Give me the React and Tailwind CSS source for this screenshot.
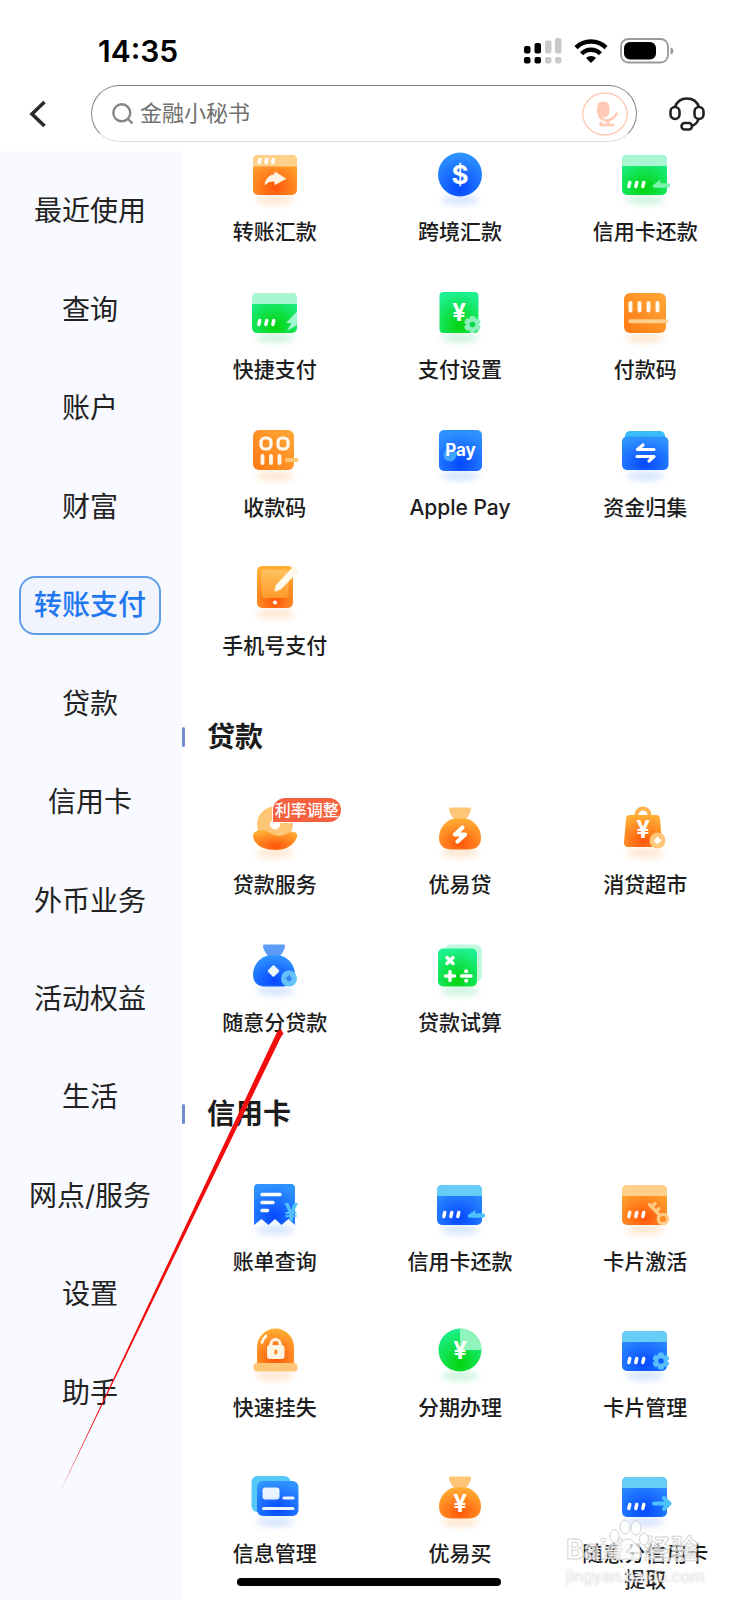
import React from "react";

const SHADES = {
  orange: { from: "#ffad33", to: "#ff560a", light: "#ffd08a", glow: "#ff8a1e" },
  blue: { from: "#2f93ff", to: "#0648ff", light: "#66cdf7", glow: "#3b82f6" },
  green: { from: "#1df08f", to: "#04d40c", light: "#a8f6d2", glow: "#19c96c" },
};

const fillOf = (tone) => `url(#fill-${tone})`;

const Defs = () => (
  <svg className="absolute h-0 w-0" aria-hidden="true">
    <defs>
      {Object.entries(SHADES).map(([tone, s]) => (
        <radialGradient key={tone} id={`fill-${tone}`} cx="0.5" cy="0.82" r="0.8">
          <stop offset="0" stopColor={s.to} />
          <stop offset="1" stopColor={s.from} />
        </radialGradient>
      ))}
      <linearGradient id="fill-amber" x1="1" y1="0" x2="0" y2="1">
        <stop offset="0" stopColor="#ffa837" />
        <stop offset="1" stopColor="#ff7a14" />
      </linearGradient>
      <linearGradient id="fill-pad" x1="0" y1="0" x2="0" y2="1">
        <stop offset="0" stopColor="#ffc25e" />
        <stop offset="1" stopColor="#ff9a2c" />
      </linearGradient>
      <filter id="soft" x="-50%" y="-100%" width="200%" height="300%">
        <feGaussianBlur stdDeviation="3" />
      </filter>
    </defs>
  </svg>
);

const Icon = ({ tone, children }) => (
  <svg viewBox="0 0 60 60" className="h-[60px] w-[60px] overflow-visible" aria-hidden="true">
    <ellipse cx="30" cy="55" rx="19" ry="5" fill={SHADES[tone].glow} opacity="0.2" filter="url(#soft)" />
    {children}
  </svg>
);

const Ticks = () => (
  <path
    d="M13.8 41.5l1-4M20.8 41.5l1-4M27.8 41.5l1-4"
    stroke="#fff"
    strokeWidth="3.4"
    strokeLinecap="round"
  />
);

const Yen = ({ x, y, size = 24, fill = "#fff" }) => (
  <text
    x={x}
    y={y}
    fill={fill}
    fontSize={size}
    fontWeight="700"
    textAnchor="middle"
    fontFamily="Inter, 'Liberation Sans', sans-serif"
  >
    ¥
  </text>
);

const Gear = ({ x, y, fill, hole }) => (
  <g transform={`translate(${x} ${y})`}>
    {[0, 60, 120].map((a) => (
      <rect key={a} x="-3" y="-8.5" width="6" height="17" rx="2" fill={fill} transform={`rotate(${a})`} />
    ))}
    <circle r="6.5" fill={fill} />
    <circle r="2.8" fill={hole} />
  </g>
);

const CardBase = ({ tone }) => (
  <>
    <rect x="7" y="10" width="45" height="40" rx="5" fill={fillOf(tone)} />
    <path d="M7 21v-6a5 5 0 0 1 5-5h35a5 5 0 0 1 5 5v6z" fill={SHADES[tone].light} />
    <Ticks />
  </>
);

const BackArrow = ({ color }) => (
  <path
    d="M38 40.5l7-5v3.2h8a1.8 1.8 0 0 1 0 3.600H39.500a1.500 1.500 0 0 1-1.500-1.800z"
    fill={color}
    stroke={color}
    strokeWidth="0.8"
    strokeLinejoin="round"
  />
);

const MoneyBag = ({ tone, neck }) => (
  <>
    <path
      d="M20.500 9.500h19a1.500 1.500 0 0 1 1.500 1.800c-.4 3.700-2.500 6.700-5 9.700H24c-2.500-3-4.600-6-5-9.700a1.500 1.500 0 0 1 1.500-1.800z"
      fill={neck}
    />
    <path
      d="M24 20.500h12c9 2 15 10.500 15 19 0 8.500-5 12-13 12H22c-8 0-13-3.500-13-12 0-8.500 6-17 15-19z"
      fill={fillOf(tone)}
    />
  </>
);

const ICONS = {
  transfer: (
    <Icon tone="orange">
      <rect x="8" y="10" width="44" height="40" rx="5" fill={fillOf("orange")} />
      <path d="M8 21.500V15a5 5 0 0 1 5-5h34a5 5 0 0 1 5 5v6.500z" fill="#ffd08a" />
      <path d="M14.300 17.500l.7-3M21 17.500l.7-3M27.700 17.500l.7-3" stroke="#fff" strokeWidth="3.4" strokeLinecap="round" />
      <path
        d="M20 39.500c1-6.500 5-9.500 10-9.800V27l10.500 6.700L30 39.500V36c-4-.3-7 .7-10 3.500z"
        fill="#fff4e4"
        stroke="#fff4e4"
        strokeWidth="1"
        strokeLinejoin="round"
      />
    </Icon>
  ),
  dollar: (
    <Icon tone="blue">
      <circle cx="30" cy="29.500" r="22" fill={fillOf("blue")} />
      <text x="30" y="39" fill="#fff" fontSize="26" fontWeight="700" textAnchor="middle" fontFamily="Inter, sans-serif">
        $
      </text>
    </Icon>
  ),
  cardGreen: (
    <Icon tone="green">
      <CardBase tone="green" />
      <BackArrow color="#7df3ae" />
    </Icon>
  ),
  quickPay: (
    <Icon tone="green">
      <CardBase tone="green" />
      <path d="M52 28.500L41 40h5.500L42 48l10-6z" fill="#a2f6cf" />
    </Icon>
  ),
  paySettings: (
    <Icon tone="green">
      <rect x="9.500" y="9" width="39" height="41" rx="4" fill={fillOf("green")} />
      <Yen x="29" y="38" />
      <Gear x={42.5} y={41.5} fill="#8bf0bb" hole="#0cd84c" />
    </Icon>
  ),
  payCode: (
    <Icon tone="orange">
      <rect x="9" y="10" width="42" height="40" rx="6" fill="url(#fill-amber)" />
      <path d="M15.500 20v7.500M24.500 20v7.500M33.500 20v7.500M42.500 20v7.500" stroke="#fff7ec" strokeWidth="4" strokeLinecap="round" />
      <path d="M15.500 38.200H51" stroke="#ffd08a" strokeWidth="4" strokeLinecap="round" />
    </Icon>
  ),
  receiveCode: (
    <Icon tone="orange">
      <rect x="8" y="9" width="41" height="40" rx="6" fill="url(#fill-amber)" />
      <rect x="16" y="17" width="10" height="11" rx="4" fill="none" stroke="#fff7ec" strokeWidth="3.2" />
      <rect x="33" y="17" width="10" height="11" rx="4" fill="none" stroke="#fff7ec" strokeWidth="3.2" />
      <path d="M17.500 35v7M26 35v7M34.500 35v7" stroke="#fff7ec" strokeWidth="3.800" strokeLinecap="round" />
      <path d="M42 39h9.500" stroke="#ffc676" strokeWidth="4" strokeLinecap="round" />
    </Icon>
  ),
  applePay: (
    <Icon tone="blue">
      <rect x="9" y="9" width="43" height="41" rx="5" fill={fillOf("blue")} />
      <circle cx="20" cy="34" r="6.500" fill="#3fa5ff" />
      <text x="30.500" y="35" fill="#fff" fontSize="17" fontWeight="700" textAnchor="middle" fontFamily="Inter, sans-serif">
        Pay
      </text>
    </Icon>
  ),
  pooling: (
    <Icon tone="blue">
      <rect x="10" y="10" width="40" height="20" rx="5" fill="#38bdf8" />
      <rect x="7" y="15.500" width="46.500" height="33.500" rx="5" fill={fillOf("blue")} />
      <path
        d="M39 28.500H22.500l5.500-4.500M22 35.500h17L34 40"
        fill="none"
        stroke="#fff"
        strokeWidth="3.2"
        strokeLinecap="round"
        strokeLinejoin="round"
      />
    </Icon>
  ),
  phonePay: (
    <Icon tone="orange">
      <rect x="12" y="7" width="36" height="42" rx="5" fill={fillOf("orange")} />
      <rect x="16.500" y="10.500" width="27" height="28.500" rx="3" fill="url(#fill-pad)" />
      <circle cx="30" cy="43.500" r="2.100" fill="#fff" />
      <path
        d="M29.500 32.500l1.500-6.500L46.500 9.500a2 2 0 0 1 3 0l2 1.700a2 2 0 0 1 0 3L35.500 30.500z"
        fill="#fffaf0"
        stroke="#ffe3b8"
        strokeWidth="0.6"
      />
    </Icon>
  ),
  loanService: (
    <Icon tone="orange">
      <circle cx="30" cy="26.500" r="11.500" fill="none" stroke="#ffc678" strokeWidth="13" />
      <path
        d="M8 38c0-4.500 5-6.500 11-5.500 6 1 9 5.500 15 5.500 5.500-.3 9-4 14-4 4 0 5 2.500 3.500 6C48.500 47.500 41 52 30.500 52 17 52 8.500 46 8 38z"
        fill={fillOf("orange")}
      />
    </Icon>
  ),
  boltBag: (
    <Icon tone="orange">
      <MoneyBag tone="orange" neck="#ffc678" />
      <path d="M32.500 29.500L25 36.500h10L27.500 43.500" fill="none" stroke="#fff" strokeWidth="4.2" strokeLinecap="round" strokeLinejoin="round" />
    </Icon>
  ),
  market: (
    <Icon tone="orange">
      <path d="M21.500 19v-2a6.500 6.500 0 0 1 13 0v2" fill="none" stroke="#ffb04e" strokeWidth="4" />
      <path
        d="M15 17h26a4 4 0 0 1 4 3.500l2 24a4 4 0 0 1-4 4.500H13a4 4 0 0 1-4-4.500l2-24A4 4 0 0 1 15 17z"
        fill={fillOf("orange")}
      />
      <Yen x="28" y="40" />
      <circle cx="42.500" cy="42.500" r="8" fill="#ffc678" />
      <path d="M42.500 38.500l4 4-4 4-4-4z" fill="#fff" />
    </Icon>
  ),
  coinBag: (
    <Icon tone="blue">
      <g transform="translate(-1 -1)">
        <MoneyBag tone="blue" neck="#5c9cf8" />
      </g>
      <rect x="-4.500" y="-4.500" width="9" height="9" rx="1.500" fill="#eef6ff" transform="translate(28.500 35) rotate(45)" />
      <circle cx="44" cy="42.500" r="8" fill="#66c3fa" />
      <rect x="-2.500" y="-2.500" width="5" height="5" fill="#2f86f4" transform="translate(44 42.500) rotate(45)" />
    </Icon>
  ),
  calculator: (
    <Icon tone="green">
      <rect x="15" y="8.500" width="37" height="37" rx="6" fill="#c2f9dd" />
      <rect x="8" y="12.500" width="39" height="38" rx="5" fill={fillOf("green")} />
      <path
        d="M17 21.500l6 6M23 21.500l-6 6M15.500 40h9M20 35.500v9M31.500 40h9.500"
        stroke="#fff"
        strokeWidth="3.4"
        strokeLinecap="round"
      />
      <circle cx="36.200" cy="35.300" r="2" fill="#fff" />
      <circle cx="36.200" cy="44.700" r="2" fill="#fff" />
    </Icon>
  ),
  bill: (
    <Icon tone="blue">
      <path d="M9 13a4 4 0 0 1 4-4h33a4 4 0 0 1 4 4v37l-6.500-6-7 6-6.500-6-6.500 6-7-6L9 50z" fill={fillOf("blue")} />
      <path d="M17 19.500h18M17 27.500h11M17 35.500h5.500" stroke="#fff" strokeWidth="3.4" strokeLinecap="round" />
      <Yen x="46" y="45.500" fill="#55c0fb" />
    </Icon>
  ),
  cardBlue: (
    <Icon tone="blue">
      <CardBase tone="blue" />
      <BackArrow color="#4cc3fa" />
    </Icon>
  ),
  cardKey: (
    <Icon tone="orange">
      <CardBase tone="orange" />
      <path
        d="M45 40.500L34.500 29.500M36.500 32l3.500-3.500M41 36.500l3-3"
        stroke="#ffcb84"
        strokeWidth="3.4"
        strokeLinecap="round"
      />
      <circle cx="48" cy="44" r="4.700" fill="#ff8a26" stroke="#ffcb84" strokeWidth="3.2" />
    </Icon>
  ),
  lock: (
    <Icon tone="orange">
      <path d="M12 43V26a18.500 18.500 0 0 1 37 0v17z" fill={fillOf("orange")} />
      <rect x="8.500" y="42" width="44" height="8.500" rx="3.500" fill="#ffc678" />
      <path d="M17 21.500c.8-2.800 2-4.800 4-6.500" fill="none" stroke="#fff" strokeWidth="2.6" strokeLinecap="round" />
      <path d="M26 25v-2a4.600 4.600 0 0 1 9.200 0v2" fill="none" stroke="#fff4e4" strokeWidth="3" />
      <rect x="22" y="24" width="17.500" height="14" rx="3" fill="#fff4e4" />
      <rect x="29.300" y="28.500" width="3" height="5" rx="1.500" fill="#ff8a26" />
    </Icon>
  ),
  installment: (
    <Icon tone="green">
      <circle cx="30" cy="29" r="21.500" fill={fillOf("green")} />
      <path d="M30 7.500A21.500 21.500 0 0 1 51.500 29H30z" fill="#8ff5bd" />
      <Yen x="30" y="38" />
    </Icon>
  ),
  cardGear: (
    <Icon tone="blue">
      <CardBase tone="blue" />
      <Gear x={46} y={40} fill="#56bffa" hole="#0f5fff" />
    </Icon>
  ),
  info: (
    <Icon tone="blue">
      <rect x="6.500" y="9" width="39" height="36" rx="6" fill="#55c8f8" />
      <rect x="12" y="14" width="41.500" height="35" rx="6" fill={fillOf("blue")} />
      <rect x="17.500" y="20.500" width="17" height="12" rx="3" fill="#e9f2ff" />
      <path d="M39 31h9M18.500 41.500H48" stroke="#e9f2ff" strokeWidth="3.2" strokeLinecap="round" />
    </Icon>
  ),
  yenBag: (
    <Icon tone="orange">
      <MoneyBag tone="orange" neck="#ffc678" />
      <Yen x="30" y="44.500" />
    </Icon>
  ),
  cardOut: (
    <Icon tone="blue">
      <CardBase tone="blue" />
      <path
        d="M39 36.500h15M49 31l5.500 5.500L49 42"
        fill="none"
        stroke="#4cc3fa"
        strokeWidth="4"
        strokeLinecap="round"
        strokeLinejoin="round"
      />
    </Icon>
  ),
};

const MENU = [
  "最近使用",
  "查询",
  "账户",
  "财富",
  "转账支付",
  "贷款",
  "信用卡",
  "外币业务",
  "活动权益",
  "生活",
  "网点/服务",
  "设置",
  "助手",
];

const ACTIVE = "转账支付";

const PAYMENTS = [
  { label: "转账汇款", icon: "transfer" },
  { label: "跨境汇款", icon: "dollar" },
  { label: "信用卡还款", icon: "cardGreen" },
  { label: "快捷支付", icon: "quickPay" },
  { label: "支付设置", icon: "paySettings" },
  { label: "付款码", icon: "payCode" },
  { label: "收款码", icon: "receiveCode" },
  { label: "Apple Pay", icon: "applePay" },
  { label: "资金归集", icon: "pooling" },
  { label: "手机号支付", icon: "phonePay" },
];

const LOANS = [
  { label: "贷款服务", icon: "loanService", badge: "利率调整" },
  { label: "优易贷", icon: "boltBag" },
  { label: "消贷超市", icon: "market" },
  { label: "随意分贷款", icon: "coinBag" },
  { label: "贷款试算", icon: "calculator" },
];

const CREDIT = [
  { label: "账单查询", icon: "bill" },
  { label: "信用卡还款", icon: "cardBlue" },
  { label: "卡片激活", icon: "cardKey" },
  { label: "快速挂失", icon: "lock" },
  { label: "分期办理", icon: "installment" },
  { label: "卡片管理", icon: "cardGear" },
  { label: "信息管理", icon: "info" },
  { label: "优易买", icon: "yenBag" },
  { label: "随意分信用卡提取", icon: "cardOut" },
];

const StatusBar = () => (
  <div className="flex h-[85px] items-center justify-between pt-4 pr-[64px] pl-[98px]">
    <span className="font-[Inter] text-[30px] leading-9 font-semibold text-black">14:35</span>

    <div className="flex items-center gap-3">
      {/* Dual SIM signal */}
      <svg viewBox="0 0 38 26" className="h-[26px] w-[38px]" aria-hidden="true">
        <g fill="#000">
          <rect x="0" y="8" width="6.500" height="7.500" rx="2" />
          <rect x="10.500" y="5" width="6.500" height="10.500" rx="2" />
          <rect x="0" y="19" width="6.500" height="6.500" rx="2" />
          <rect x="10.500" y="19" width="6.500" height="6.500" rx="2" />
        </g>
        <g fill="#c9c9c9">
          <rect x="21" y="2.500" width="6.500" height="13" rx="2" />
          <rect x="31" y="0" width="6.500" height="15.500" rx="2" />
          <rect x="21" y="19" width="6.500" height="6.500" rx="2" />
          <rect x="31" y="19" width="6.500" height="6.500" rx="2" />
        </g>
      </svg>

      <svg viewBox="0 0 34 24" className="h-6 w-[34px]" aria-hidden="true">
        <g fill="none" stroke="#000" strokeWidth="4.5">
          <path d="M2 8.600a21.500 21.500 0 0 1 30 0" />
          <path d="M7.600 14.800a13 13 0 0 1 18.800 0" />
        </g>
        <path d="M17 24l-5-5a7 7 0 0 1 10 0z" fill="#000" />
      </svg>

      <svg viewBox="0 0 54 26" className="h-[26px] w-[54px]" aria-hidden="true">
        <rect x="1" y="1" width="47" height="23.500" rx="7.500" fill="none" stroke="#999" strokeWidth="1.8" />
        <rect x="4" y="4" width="32" height="17.500" rx="6" fill="#000" />
        <path d="M50.500 9.500c2 .5 3 1.700 3 3.500s-1 3-3 3.500z" fill="#999" />
      </svg>
    </div>
  </div>
);

const SearchBar = () => (
  <div className="flex items-center pr-[33px] pl-[29px]">
    <button type="button" aria-label="返回" className="mr-[44px]">
      <svg viewBox="0 0 18 28" className="h-7 w-[18px]" fill="none" stroke="#2b2b2b" strokeWidth="3.6" aria-hidden="true">
        <path d="M15.500 2L3 14l12.500 12" />
      </svg>
    </button>

    <div className="flex h-[57px] flex-1 items-center rounded-full border border-t-[#858585] border-r-[#858585] border-b-[#dcdcdc] border-l-[#858585] pr-2 pl-5">
      <svg viewBox="0 0 22 22" className="h-[22px] w-[22px]" fill="none" stroke="#85868b" strokeWidth="2.4" aria-hidden="true">
        <circle cx="9.800" cy="9.800" r="8.500" />
        <path d="M16 16l4.500 4.500" />
      </svg>
      <input
        type="text"
        aria-label="搜索"
        placeholder="金融小秘书"
        className="ml-[6px] w-full min-w-0 flex-1 bg-transparent text-[22px] text-[#333] outline-none placeholder:text-[#707070]"
      />
      <button type="button" aria-label="语音搜索">
        <svg viewBox="0 0 46 44" className="h-11 w-[46px]" fill="none" stroke="#ffc9b6" aria-hidden="true">
          <ellipse cx="23" cy="22" rx="22.200" ry="21" strokeWidth="1.4" />
          <rect x="15" y="9.500" width="12.500" height="16" rx="6" fill="#ffc9b6" stroke="none" />
          <path d="M17 24c3 4 7.500 5.500 11.500 3.500 3.500-1.500 5.500-3.500 6.500-7" strokeWidth="2.6" />
          <path d="M24 28l3 4M17.500 30.500l3.500 1.500M17.500 33h14.500" strokeWidth="2.4" />
        </svg>
      </button>
    </div>

    <button type="button" aria-label="客服" className="ml-[32px]">
      <svg viewBox="0 0 36 34" className="h-[34px] w-9" fill="none" stroke="#222" strokeWidth="2.6" aria-hidden="true">
        <path d="M6 10C8 4.500 12.500 1.500 18 1.500S28 4.500 30 10" />
        <rect x="1.500" y="10" width="9" height="12" rx="4.500" />
        <rect x="25.500" y="10" width="9" height="12" rx="4.500" />
        <path d="M29.500 22c-1.200 4-3.300 6-7 7" />
        <rect x="12.500" y="26" width="10.500" height="6.500" rx="3.200" />
      </svg>
    </button>
  </div>
);

const Sidebar = () => (
  <nav className="mt-[6px] flex w-[182px] shrink-0 flex-col bg-[#f8faff] pt-[11px] pr-[2px] pb-[158px]">
    {MENU.map((name) => (
      <div key={name} className="flex flex-1 items-center justify-center">
        <a
          href="#"
          aria-current={name === ACTIVE ? "page" : undefined}
          className={
            name === ACTIVE
              ? "flex h-[59px] w-[142px] items-center justify-center rounded-2xl border-2 border-[#5f9fe8] bg-[#f1f3fd] text-[28px] leading-10 font-medium text-[#1f78f0]"
              : "text-[28px] leading-10 text-[#222]"
          }
        >
          {name}
        </a>
      </div>
    ))}
  </nav>
);

const Tile = ({ item }) => (
  <a href="#" className="flex flex-col items-center">
    <span className="relative">
      {ICONS[item.icon]}
      {item.badge && (
        <span className="absolute top-0 left-7 rounded-full rounded-bl-none bg-[#f5603f] px-[2px] text-[16px] leading-6 font-medium whitespace-nowrap text-white ring-1 ring-white">
          {item.badge}
        </span>
      )}
    </span>
    <span className="mt-[14px] w-[130px] text-center text-[21px] leading-[26px] font-medium text-[#1c1c1c]">
      {item.label}
    </span>
  </a>
);

const Section = ({ title, children }) => (
  <section className="mt-[58px]">
    <div className="flex items-center">
      <span className="h-5 w-[3px] rounded-sm bg-[#6d8fd0]" />
      <h2 className="ml-[22px] text-[28px] leading-10 font-bold text-[#1c1c1c]">{title}</h2>
    </div>
    <div className="mt-[41px]">{children}</div>
  </section>
);

/* Red pointer running from the lower left up to the loan entry */
const Pointer = () => (
  <svg viewBox="0 0 226 466" className="pointer-events-none absolute top-[1029px] left-[59px] h-[466px] w-[226px]" aria-hidden="true">
    <path d="M0 465L218 3l4-3 2.500 5-2 2z" fill="#f20d0d" />
  </svg>
);

const Watermark = () => (
  <div className="pointer-events-none absolute right-10 bottom-[14px] w-[132px]" aria-hidden="true">
    <svg viewBox="0 0 44 44" className="absolute -top-4 left-[42px] h-11 w-11" fill="#fff" fillOpacity="0.7" stroke="#d2d2d2">
      <ellipse cx="17" cy="9" rx="5" ry="7" />
      <ellipse cx="28" cy="10" rx="5" ry="7" />
      <ellipse cx="6.500" cy="18" rx="4.500" ry="6.500" />
      <ellipse cx="36" cy="21" rx="4.500" ry="6" />
      <path d="M20 21c5 0 7 5 10 8 4 4 5 11-2 13-4 1-6-1-9-1s-6 1-9 0c-6-2-5-9-1-13 4-3 6-7 11-7z" />
    </svg>
    <div className="flex justify-between text-[27px] leading-8 font-bold text-white/60 [-webkit-text-stroke:1px_#d6d6d6]">
      <span>Baidu</span>
      <span>经验</span>
    </div>
    <div className="text-[16px] leading-5 whitespace-nowrap text-white/80 [text-shadow:0_0_2px_#bbb]">jingyan.baidu.com</div>
  </div>
);

const App = () => {
  return (
    <div
      lang="zh-CN"
      className="relative flex min-h-screen flex-col overflow-hidden bg-white font-[Inter,'Noto_Sans_CJK_SC',sans-serif]"
    >
      <Defs />
      <StatusBar />
      <SearchBar />

      <div className="mt-[3px] flex flex-1">
        <Sidebar />

        <main className="min-w-0 flex-1">
          <div className="grid grid-cols-3 gap-y-[38px]">
            {PAYMENTS.map((item) => (
              <Tile key={item.icon} item={item} />
            ))}
          </div>

          <Section title="贷款">
            <div className="grid grid-cols-3 gap-y-[38px]">
              {LOANS.map((item) => (
                <Tile key={item.icon} item={item} />
              ))}
            </div>
          </Section>

          <Section title="信用卡">
            <div className="grid grid-cols-3 gap-y-[46px]">
              {CREDIT.map((item) => (
                <Tile key={item.icon} item={item} />
              ))}
            </div>
          </Section>
        </main>
      </div>

      <Pointer />
      <Watermark />
      <div className="absolute bottom-[14px] left-1/2 h-2 w-[264px] -translate-x-1/2 rounded-full bg-black" />
    </div>
  );
};

export default App;
